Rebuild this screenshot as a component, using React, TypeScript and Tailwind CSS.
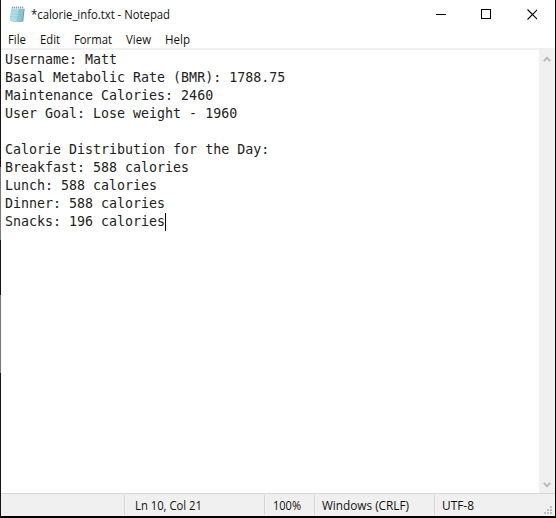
import React from "react";

const lines = [
  "Username: Matt",
  "Basal Metabolic Rate (BMR): 1788.75",
  "Maintenance Calories: 2460",
  "User Goal: Lose weight - 1960",
  "",
  "Calorie Distribution for the Day:",
  "Breakfast: 588 calories",
  "Lunch: 588 calories",
  "Dinner: 588 calories",
  "Snacks: 196 calories",
];

function Label({ text, width }: { text: string; width: number }) {
  return (
    <svg width={width} height="18" className="block shrink-0 overflow-visible">
      <text x="0" y="13" textLength={width} lengthAdjust="spacingAndGlyphs" fill="#111">
        {text}
      </text>
    </svg>
  );
}

function NotepadIcon() {
  return (
    <svg width="17" height="18" viewBox="0 0 17 18" className="block shrink-0">
      <path d="M14.8 3 15.600 4 14.200 16.500 12 16.800 2 16.300z" fill="#7d8d92" />
      <path d="M2.500 2.500H15L13.200 16H.8z" fill="#8cc6d6" />
      <path d="M2.500 2.500H10L7.500 16H.8z" fill="#b2dde7" />
      <path d="M2.200 6h12M1.900 9h12M1.500 12h12" stroke="#7fbdcd" strokeWidth=".4" />
      <path d="M2.500 2.500H15l-.2 1.500H2.300z" fill="#e6f0f2" />
      <path d="M3.500 1.500v2M5.500 1.500v2M7.500 1.500v2M9.500 1.500v2M11.500 1.500v2M13.500 1.500v2" stroke="#7b898c" strokeWidth=".8" />
    </svg>
  );
}

export default function App() {
  return (
    <div className="flex h-[518px] w-[556px] overflow-hidden bg-white font-['Open_Sans','Noto_Sans',sans-serif] text-[12px] text-black">
      <div className="flex w-px shrink-0 flex-col bg-[#151515]">
        <div className="h-[167px]" />
        <div className="h-[73px] bg-[#777]" />
        <div className="h-[55px]" />
        <div className="h-[78px] bg-[#777]" />
      </div>
      <div className="flex w-[554px] flex-col">
        <header className="flex h-[31px] shrink-0 items-start">
          <div className="pt-[5px] pl-2"><NotepadIcon /></div>
          <div className="ml-[5px] pt-[6px]"><Label text="*calorie_info.txt - Notepad" width={139} /></div>
          <svg width="101" height="12" viewBox="-1 0 101 12" fill="none" stroke="#000" className="mt-2 mr-[18px] ml-auto block" shapeRendering="crispEdges">
            <path d="M-1 6.500h10" />
            <path d="M44.500 1.500h9v9h-9z" />
            <path d="m90.500 1.500 10 10m0-10-10 10" shapeRendering="auto" strokeWidth="1.1" />
          </svg>
        </header>
        <nav className="flex h-[17px] shrink-0 pl-[7px]">
          <div className="w-8"><Label text="File" width={18} /></div>
          <div className="w-[34px]"><Label text="Edit" width={20} /></div>
          <div className="w-[52px]"><Label text="Format" width={38} /></div>
          <div className="w-[39px]"><Label text="View" width={25} /></div>
          <Label text="Help" width={25} />
        </nav>
        <main className="flex h-[445px] shrink-0 border-t-2 border-[#f0f0f0]">
          <div className="flex-1 pt-px pl-1 font-['DejaVu_Sans_Mono',monospace] text-[13.3px] leading-[18px] whitespace-pre text-[#222]">
            {lines.map((line, i) => (
              <div key={i} className="flex h-[18px] items-center">
                <span>{line}</span>
                {i === lines.length - 1 && <span className="h-[18px] w-px bg-black" />}
              </div>
            ))}
          </div>
          <div className="flex w-4 flex-col items-center justify-between bg-[#f0f0f0] pt-[6px] pr-px pb-[5px]">
            <svg width="8" height="7" viewBox="0 0 8 7" fill="none" stroke="#bdbdbd" strokeWidth="2"><path d="m.7 5.200 3.300-3.400 3.300 3.400" /></svg>
            <svg width="8" height="7" viewBox="0 0 8 7" fill="none" stroke="#bdbdbd" strokeWidth="2"><path d="m.7 1.800 3.300 3.400 3.300-3.400" /></svg>
          </div>
        </main>
        <footer className="flex h-[23px] shrink-0 border-t border-[#d7d7d7] bg-[#f0f0f0] pt-px">
          <div className="h-5 w-[124px] border-r border-[#d7d7d7]" />
          <div className="h-5 w-[140px] border-r border-[#d7d7d7] pt-[2px] pl-[10px]"><Label text="Ln 10, Col 21" width={67} /></div>
          <div className="h-5 w-[50px] border-r border-[#d7d7d7] pt-[2px] pl-[8px]"><Label text="100%" width={28} /></div>
          <div className="h-5 w-[120px] border-r border-[#d7d7d7] pt-[2px] pl-[7px]"><Label text="Windows (CRLF)" width={87} /></div>
          <div className="pt-[2px] pl-[7px]"><Label text="UTF-8" width={32} /></div>
          <svg width="9" height="9" fill="#bfbfbf" className="mt-[11px] mr-[2px] ml-auto block">
            <path d="M6 0h2v2H6zM3 3h2v2H3zM6 3h2v2H6zM0 6h2v2H0zM3 6h2v2H3zM6 6h2v2H6z" />
          </svg>
        </footer>
        <div className="h-[2px] bg-black" />
      </div>
      <div className="w-px bg-black" />
    </div>
  );
}
